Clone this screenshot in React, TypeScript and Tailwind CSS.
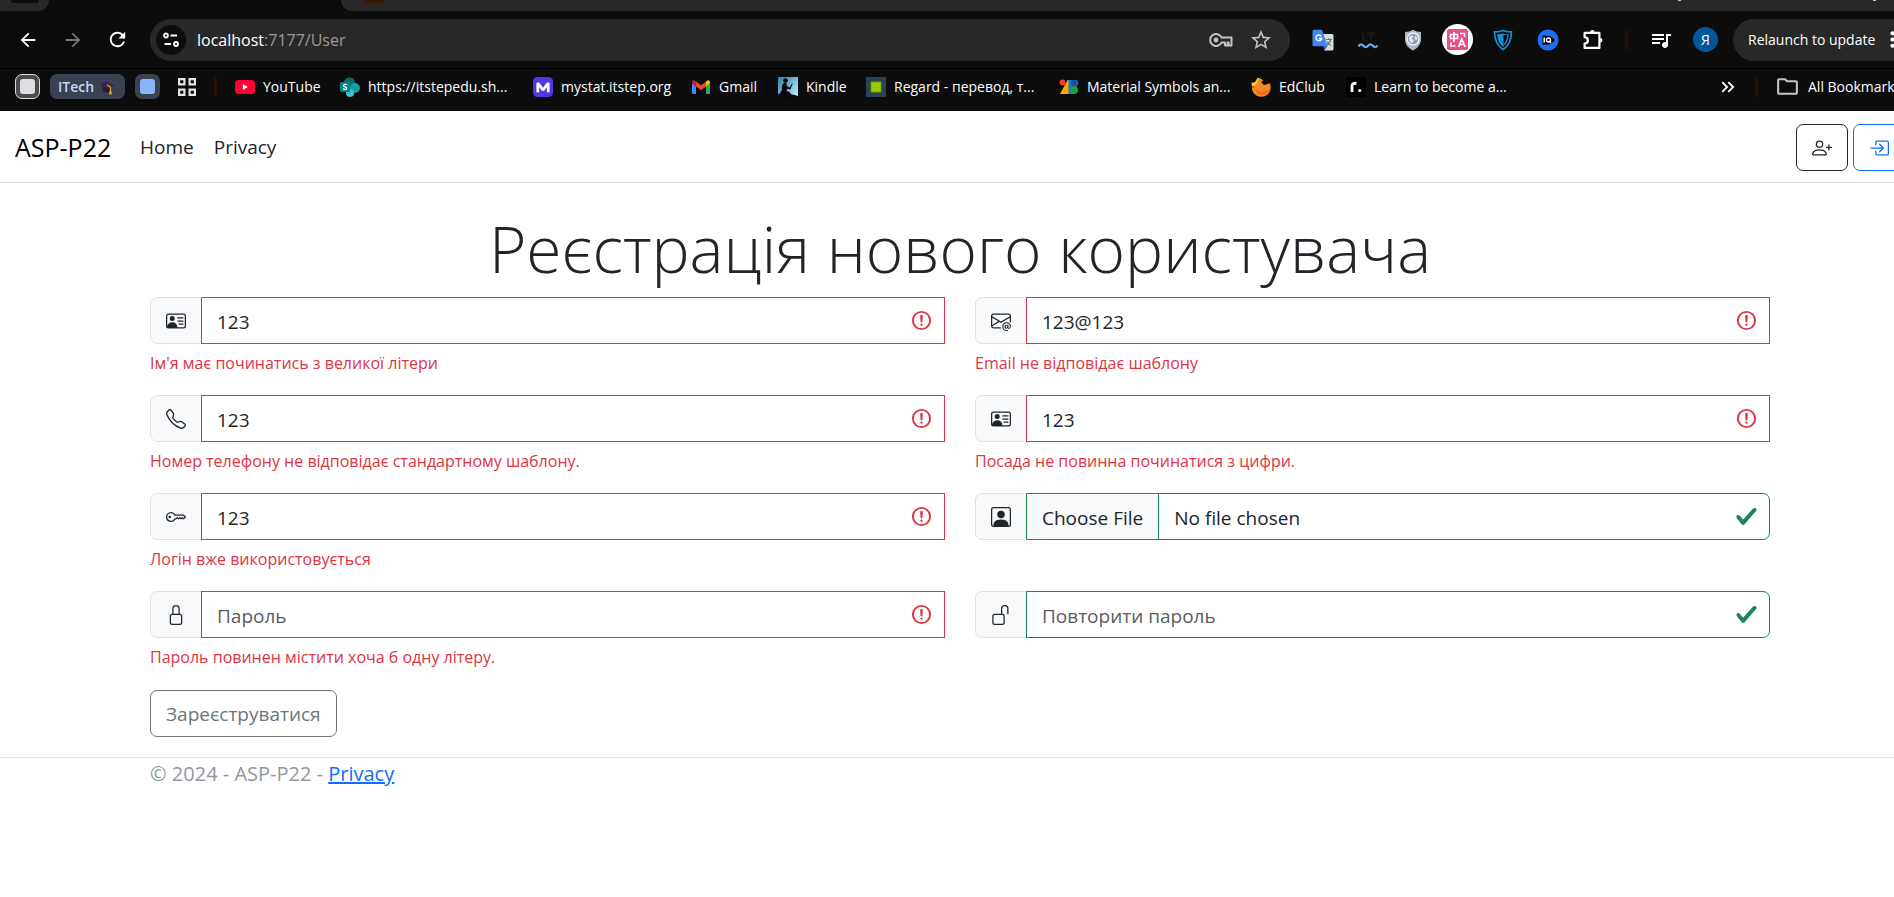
import type { ReactNode } from "react";
import {
  MdArrowBack,
  MdArrowForward,
  MdRefresh,
  MdStarBorder,
  MdOutlineFolder,
  MdMoreVert,
  MdQueueMusic,
  MdKeyboardDoubleArrowRight,
} from "react-icons/md";
import {
  BsBoxArrowInRight,
  BsEnvelopeAt,
  BsKey,
  BsLock,
  BsPersonPlus,
  BsPersonSquare,
  BsPersonVcard,
  BsTelephone,
  BsUnlock,
} from "react-icons/bs";

/* ---------- toolbar drawings ---------- */

const TuneIcon = () => (
  <svg viewBox="0 0 16 16" className="size-4" fill="none" stroke="#fff" strokeWidth="1.8">
    <circle cx="3" cy="3.5" r="2" />
    <path d="M7.5 3.5H14M1.5 12H8" />
    <circle cx="13" cy="12" r="2" />
  </svg>
);

const PasswordKeyIcon = () => (
  <svg viewBox="0 0 24 14" className="h-[14px] w-6" fill="none" stroke="#c4c4c4" strokeWidth="2">
    <path d="M12.6 4.6A6 6 0 1 0 12.6 9.4H16V12.5H18.6V9.4H19.6V12.5H22.5V4.6Z" strokeLinejoin="round" />
    <circle cx="7" cy="7" r="2.4" fill="#c4c4c4" stroke="none" />
  </svg>
);

const TranslateIcon = () => (
  <svg viewBox="0 0 22 22" className="size-[22px]">
    <path d="M9 5h11a1.500 1.500 0 0 1 1.500 1.500V20a1.500 1.500 0 0 1-1.500 1.500h-7.500z" fill="#dcdcdc" />
    <path d="M13.500 10.500h6.500M16.700 9v1.500M18.700 10.500c-.7 3-2.500 4.800-4.700 6M14.700 12.500c1 2 2.500 3.300 4.500 4" stroke="#5f7f86" strokeWidth="1.200" fill="none" />
    <path d="M2 .8h8l5.500 16.500H2A1.500 1.500 0 0 1 .5 15.800V2.300A1.500 1.500 0 0 1 2 .8z" fill="#4285f4" />
    <path d="M11.500 17.300h4l-3.300 4z" fill="#2a56c6" />
    <path d="M9.300 7.300A2.900 2.900 0 1 0 9.700 9.500H6.900" stroke="#fff" strokeWidth="1.400" fill="none" />
  </svg>
);

const WaveIcon = () => (
  <svg viewBox="0 0 22 22" className="size-[22px]" fill="none">
    <path d="M6 3.500v8h4M10 4.500h8M14 4.500v8" stroke="#181818" strokeWidth="2.400" />
    <path d="M1.500 17.500c1.600-2.700 3.200-2.700 4.800-.8s3.200 1.900 4.800 0 3.200-1.900 4.800 0 3.200 1.900 4.600-.2" stroke="#5cb3f0" strokeWidth="2.200" />
  </svg>
);

const GlobeShieldIcon = () => (
  <svg viewBox="0 0 22 22" className="size-[22px]">
    <path d="M11 .8c2.500 1.600 5 2.100 8 2.200v7c0 5.500-3.200 9-8 11.400C6.200 19 3 15.500 3 10V3c3-.1 5.500-.6 8-2.200z" fill="#aeb6c4" />
    <circle cx="11" cy="10" r="6" fill="#8f9bb0" stroke="#eceff4" strokeWidth="1.500" />
    <path d="M7 8.500c1.500-2.500 3.500-2.500 4.500-1.500L10 9.500l2 2-2 3c-2-1-3.500-3-3-6zM13 6.500l2.500 2-1 3-2-1.500z" fill="#dfe4ec" />
  </svg>
);

const PinkTranslateIcon = () => (
  <svg viewBox="0 0 31 31" className="size-[31px]">
    <circle cx="15.500" cy="15.500" r="15.500" fill="#fff" />
    <rect x="5" y="5" width="21" height="21" rx="2" fill="#ea4c89" />
    <path d="M8.500 10.500h7v4h-7zM12 8v10M18 9.500h4.500V13M9 18.500V22h4.500M16.500 23l3.300-8 3.400 8M17.800 20.500h4" stroke="#fff" strokeWidth="1.700" fill="none" />
  </svg>
);

const BlueShieldIcon = () => (
  <svg viewBox="0 0 22 22" className="size-[22px]" fill="none" stroke="#1b8fd0">
    <path d="M11 1.500c2.500 1 5.500 1.500 8.500 1.300-.1 8.500-2.500 14-8.500 17.700C5 16.800 2.600 11.300 2.500 2.800 5.500 3 8.500 2.500 11 1.500z" strokeWidth="1.600" />
    <path d="M11 5c1.700.6 3.300.9 5 .9-.4 5-2 8.700-5 11.200-3-2.500-4.600-6.200-5-11.200 1.700 0 3.300-.3 5-.9z" strokeWidth="1.200" />
    <path d="M11 5c-1.700.6-3.300.9-5 .9.400 5 2 8.700 5 11.200z" fill="#1b8fd0" />
  </svg>
);

const IqIcon = () => (
  <svg viewBox="0 0 22 22" className="size-[22px]">
    <circle cx="11" cy="11" r="10.500" fill="#1f6df5" />
    <path d="M5.500 6.500l7 .5 5 3v2l-5 3.500-7 .5z" fill="#0b0b0b" />
    <path d="M7.300 8.500v5" stroke="#fff" strokeWidth="1.600" />
    <circle cx="11.500" cy="11" r="2" fill="none" stroke="#fff" strokeWidth="1.300" />
    <path d="M12 11.800l2 2" stroke="#fff" strokeWidth="1.200" />
  </svg>
);

const PuzzleIcon = () => (
  <svg viewBox="0 0 22 22" className="size-[22px]" fill="none" stroke="#fff" strokeWidth="2.200" strokeLinejoin="round">
    <path d="M2.600 3.900H17.400V18.900H2.600V14.600C4.600 14.400 5.900 13.200 5.900 11.400S4.600 8.400 2.600 8.200Z" />
    <path d="M8 3.200a2.300 2.300 0 0 1 4.600 0zM18.200 9a2.300 2.300 0 0 1 0 4.600z" fill="#fff" stroke="none" />
  </svg>
);

/* ---------- bookmark drawings ---------- */

const CapIcon = () => (
  <svg viewBox="0 0 16 16" className="size-4">
    <path d="M3.500 7v5c2 1.800 6 1.800 7.500 0V7z" fill="#2c1b3a" />
    <path d="M.5 5.500L7 2l8.500 4.500L9 10z" fill="#3d2450" />
    <path d="M8 6l3.500 2v6" stroke="#f5a623" strokeWidth="1.200" fill="none" />
    <path d="M10.500 12.500h2l.3 3h-2.600z" fill="#f5a623" />
  </svg>
);

const AppsIcon = () => (
  <svg viewBox="0 0 20 20" className="size-5" fill="none" stroke="#e3e3e3" strokeWidth="2.200">
    <path d="M2.100 2.100h5.300v5.300H2.100zM12.600 2.100h5.300v5.300h-5.300zM2.100 12.600h5.300v5.300H2.100zM12.600 12.600h5.300v5.300h-5.300z" />
  </svg>
);

const YouTubeIcon = () => (
  <svg viewBox="0 0 20 20" className="size-5">
    <rect x="0" y="3" width="20" height="14" rx="3.500" fill="#ff0033" />
    <path d="M7.800 7v6l5.200-3z" fill="#fff" />
  </svg>
);

const SharePointIcon = () => (
  <svg viewBox="0 0 20 20" className="size-5">
    <circle cx="9.500" cy="6" r="5.700" fill="#036c70" />
    <circle cx="15" cy="11" r="5" fill="#1a9ba1" />
    <circle cx="10" cy="16" r="4" fill="#37c6d0" />
    <rect x="0" y="5" width="10" height="10" rx="1" fill="#038387" />
    <path d="M6.800 7.800C5.500 7 3.500 7.300 3.500 8.700s3.200 1 3.200 2.500-2.200 1.600-3.500.7" stroke="#fff" strokeWidth="1.300" fill="none" />
  </svg>
);

const MystatIcon = () => (
  <svg viewBox="0 0 20 20" className="size-5">
    <rect width="20" height="20" rx="4.500" fill="#5038e0" />
    <path d="M4.800 15.200V6L10 13l5.200-7v9.200" stroke="#fff" strokeWidth="2.800" fill="none" strokeLinejoin="bevel" />
  </svg>
);

const GmailIcon = () => (
  <svg viewBox="0 0 20 20" className="size-5">
    <path d="M1 6l4 3v8H2.300A1.300 1.300 0 0 1 1 15.700z" fill="#4285f4" />
    <path d="M19 6l-4 3v8h2.700a1.300 1.300 0 0 0 1.300-1.300z" fill="#34a853" />
    <path d="M15 4.500l1-.8c1.300-1 3-.1 3 1.500V6.500L15 9.500z" fill="#fbbc04" />
    <path d="M5 9.500v-5l5 3.800 5-3.800v5l-5 3.800z" fill="#ea4335" />
    <path d="M1 5.200c0-1.600 1.700-2.500 3-1.500l1 .8v5l-4-3z" fill="#c5221f" />
  </svg>
);

const KindleIcon = () => (
  <svg viewBox="0 0 20 20" className="size-5">
    <defs>
      <linearGradient id="kindleSky" x1="0" y1="0" x2="1" y2="1">
        <stop offset="0" stopColor="#2f7fae" />
        <stop offset="1" stopColor="#c4f4ff" />
      </linearGradient>
    </defs>
    <rect width="20" height="20" fill="url(#kindleSky)" />
    <circle cx="7.500" cy="3.500" r="2.300" fill="#05080a" />
    <path d="M6 5.500c-2.600 2.500-2.500 5-2 7.500L1.500 16.500c2 1.600 7 2 12 1L11 14.500l-2.500-.3 1-2.700 2.700 1.300 2.500-6-.8-.3-2.400 4-2.700-1.600L8.500 6z" fill="#05080a" />
    <path d="M0 17c6-.8 14-.4 20 2v1H0z" fill="#05080a" />
  </svg>
);

const RegardIcon = () => (
  <svg viewBox="0 0 20 20" className="size-5">
    <rect width="20" height="20" fill="#2b4256" />
    <rect x="5" y="5" width="10" height="10" fill="#99cc00" stroke="#6e9a10" />
  </svg>
);

const MaterialIcon = () => (
  <svg viewBox="0 0 20 20" className="size-5">
    <path d="M1 17L8.500 3H12v14z" fill="#f9ab00" />
    <circle cx="3.500" cy="5.500" r="2.900" fill="#ea4335" />
    <path d="M9.500 3H15a3.300 3.300 0 0 1 2 6.300L15 17H9.500z" fill="#1a73e8" />
    <circle cx="15" cy="13" r="4" fill="#1e9e4a" />
    <circle cx="15" cy="6" r="3" fill="#174ea6" />
  </svg>
);

const PhoenixIcon = () => (
  <svg viewBox="0 0 20 20" className="size-5">
    <path d="M.5 5.500C4 6.500 5 4.500 6 1.500L8.500 1l4 2.500-2 .8c0 2 1.500 3.700 3.500 3.500 2.500-.2 3-2 5.500-1-.5 1 .5 2 0 5.500-.8 4.500-4.500 7.500-9 7.500-6 0-10-4.500-9.500-10l2 1z" fill="#f08a24" />
    <path d="M.5 5.500C4 6.500 5 4.500 6 1.500L8 1c-.5 4-2 7-7 8.800L1 10.500z" fill="#f9c04a" />
    <path d="M5 12c3 3.500 8 4 13 .5-1.500 4-4.500 6-8.500 5.500C7 17.500 5.500 15 5 12z" fill="#f56a14" />
  </svg>
);

const RoadmapIcon = () => (
  <svg viewBox="0 0 20 20" className="size-5">
    <rect width="20" height="20" rx="2" fill="#000" />
    <path d="M6 15V9c0-2 1.500-3 4.500-2.700" stroke="#fff" strokeWidth="2.800" fill="none" />
    <circle cx="13.700" cy="13.500" r="1.500" fill="#fff" />
  </svg>
);

type Bookmark = { label: string; icon: ReactNode; width: string };

const bookmarks: Bookmark[] = [
  { label: "YouTube", icon: <YouTubeIcon />, width: "w-[105px]" },
  { label: "https://itstepedu.sh...", icon: <SharePointIcon />, width: "w-[193px]" },
  { label: "mystat.itstep.org", icon: <MystatIcon />, width: "w-[158px]" },
  { label: "Gmail", icon: <GmailIcon />, width: "w-[87px]" },
  { label: "Kindle", icon: <KindleIcon />, width: "w-[88px]" },
  { label: "Regard - перевод, т...", icon: <RegardIcon />, width: "w-[193px]" },
  { label: "Material Symbols an...", icon: <MaterialIcon />, width: "w-[192px]" },
  { label: "EdClub", icon: <PhoenixIcon />, width: "w-[95px]" },
  { label: "Learn to become a...", icon: <RoadmapIcon />, width: "w-[190px]" },
];

const extensions: { name: string; icon: ReactNode }[] = [
  { name: "Translate", icon: <TranslateIcon /> },
  { name: "Grammar", icon: <WaveIcon /> },
  { name: "Web guard", icon: <GlobeShieldIcon /> },
  { name: "Immersive translate", icon: <PinkTranslateIcon /> },
  { name: "VPN", icon: <BlueShieldIcon /> },
  { name: "IQ", icon: <IqIcon /> },
  { name: "Extensions", icon: <PuzzleIcon /> },
];

const Divider = () => <span className="h-5 w-[3px] shrink-0 rounded-full bg-[#2a0f04]" />;

function BrowserChrome() {
  return (
    <div className="bg-[#0c0c0c] text-white">
      <div className="flex h-[11px] gap-[292px] overflow-hidden">
        <div className="flex w-[49px] shrink-0 justify-center rounded-br-[16px] bg-[#282828]">
          <span className="h-[3px] w-[28px] rounded-b-full bg-[#0c0c0c]" />
        </div>
        <div className="flex grow justify-between rounded-bl-[16px] bg-[#282828] pr-[44px] pl-[22px]">
          <span className="h-[3px] w-5 rounded-b-full bg-[#3d1604]" />
          <div className="flex gap-[192px]">
            <span className="h-px w-[3px] bg-[#c4c4c4]" />
            <span className="h-px w-[3px] bg-[#c4c4c4]" />
          </div>
        </div>
      </div>

      <div className="flex h-[57px] items-center">
        <div className="flex w-[150px] shrink-0 items-center pl-[5px]">
          <button aria-label="Back" className="flex w-[45px] justify-center">
            <MdArrowBack className="size-[22px]" />
          </button>
          <button aria-label="Forward" className="flex w-[45px] justify-center text-[#757575]">
            <MdArrowForward className="size-[22px]" />
          </button>
          <button aria-label="Reload" className="flex w-[45px] justify-center">
            <MdRefresh className="size-[23px]" />
          </button>
        </div>
        <div className="flex h-[42px] min-w-0 grow items-center rounded-full bg-[#282828] pr-[17px] pl-[6px]">
          <button aria-label="Site information" className="flex size-[30px] shrink-0 items-center justify-center rounded-full bg-[#0c0c0c]">
            <TuneIcon />
          </button>
          <div className="grow pl-[11px] text-[16px] text-[#9a9a9a]">
            <span className="text-white">localhost</span>:7177/User
          </div>
          <button aria-label="Passwords" className="mr-4">
            <PasswordKeyIcon />
          </button>
          <button aria-label="Bookmark this page">
            <MdStarBorder className="size-[24px] text-[#c4c4c4]" />
          </button>
        </div>
        <div className="flex shrink-0 items-center pl-[10px]">
          {extensions.map((e) => (
            <button key={e.name} aria-label={e.name} className="flex w-[45px] justify-center">
              {e.icon}
            </button>
          ))}
          <div className="flex w-[23px] justify-center">
            <Divider />
          </div>
          <button aria-label="Media controls" className="flex w-[45px] justify-center">
            <MdQueueMusic className="size-[24px]" />
          </button>
          <button aria-label="Profile" className="flex w-[45px] justify-center">
            <span className="flex size-[25px] items-center justify-center rounded-full bg-[#01579b] text-[14px]">Я</span>
          </button>
          <button className="ml-[5px] flex h-[42px] w-[187px] items-center justify-between rounded-l-full bg-[#282828] px-[15px] text-[14px] whitespace-nowrap">
            Relaunch to update
            <MdMoreVert className="size-[25px] shrink-0" />
          </button>
        </div>
      </div>

      <div className="flex h-[43px] items-center border-t border-black pb-[7px] text-[14px] whitespace-nowrap">
        <div className="flex w-[235px] shrink-0 items-center pl-[15px]">
          <button aria-label="Tab group" className="flex size-[25px] items-center justify-center rounded-[7px] border border-[#dcdde0] bg-[#4a4b4d]">
            <span className="size-[15px] rounded-[3px] bg-[#dcdde0]" />
          </button>
          <button className="ml-[10px] flex h-[25px] w-[75px] items-center justify-between rounded-[7px] bg-[#3a4150] pr-[10px] pl-2 font-semibold text-[#c7d9f8]">
            ITech <CapIcon />
          </button>
          <button aria-label="Blue tab group" className="ml-[10px] flex size-[25px] items-center justify-center rounded-[7px] bg-[#3a4150]">
            <span className="size-[15px] rounded-[3px] bg-[#8ab4f8]" />
          </button>
          <button aria-label="Apps" className="mr-[17px] ml-[17px]">
            <AppsIcon />
          </button>
          <Divider />
        </div>
        <nav className="flex grow">
          {bookmarks.map((b) => (
            <a key={b.label} href="#" className={`flex shrink-0 items-center gap-2 ${b.width}`}>
              {b.icon}
              {b.label}
            </a>
          ))}
        </nav>
        <button aria-label="More bookmarks">
          <MdKeyboardDoubleArrowRight className="size-[22px]" />
        </button>
        <div className="flex w-[34px] justify-center">
          <Divider />
        </div>
        <button className="flex w-[147px] items-center gap-2 pl-[2px]">
          <MdOutlineFolder className="size-[25px] text-[#c4c4c4]" />
          All Bookmarks
        </button>
      </div>
    </div>
  );
}

/* ---------- site ---------- */

const InvalidMark = () => (
  <svg viewBox="0 0 12 12" className="pointer-events-none absolute top-3 right-3 size-[23px]" fill="none" stroke="#dc3545">
    <circle cx="6" cy="6" r="4.500" />
    <path strokeLinejoin="round" d="M5.800 3.600h.4L6 6.500z" />
    <circle cx="6" cy="8.200" r=".6" fill="#dc3545" stroke="none" />
  </svg>
);

const ValidMark = () => (
  <svg viewBox="0 0 8 8" className="pointer-events-none absolute top-3 right-3 size-[23px]">
    <path fill="#198754" d="M2.300 6.730.6 4.530c-.4-1.040.46-1.400 1.100-.8l1.100 1.400 3.400-3.800c.6-.63 1.600-.27 1.200.7l-4 4.600c-.43.5-.8.4-1.100.1z" />
  </svg>
);

type FieldProps = {
  id: string;
  name: string;
  icon: ReactNode;
  type?: string;
  value?: string;
  placeholder?: string;
  error?: string;
};

function Field({ id, name, icon, type = "text", value, placeholder, error }: FieldProps) {
  const isFile = type === "file";
  return (
    <div className="h-[98px]">
      <div className="flex h-[47px]">
        <label
          htmlFor={id}
          aria-label={name}
          className="flex w-[52px] shrink-0 items-center justify-center rounded-l-[7px] border border-[#dee2e6] bg-[#f8f9fa] text-[20px]"
        >
          {icon}
        </label>
        <div className="relative -ml-px grow">
          <input
            id={id}
            type={type}
            defaultValue={value}
            placeholder={placeholder}
            className={`h-full w-full border bg-white text-[#212529] outline-none placeholder:text-[#595c5f] ${
              error ? "border-[#dc3545]" : "rounded-r-[7px] border-[#198754]"
            } ${
              isFile
                ? "leading-[45px] file:mr-[15px] file:h-[45px] file:border-0 file:border-r file:border-solid file:border-[#198754] file:bg-[#f8f9fa] file:px-[15px] file:pt-[2px] file:text-[#212529]"
                : "pt-[2px] pr-12 pl-[15px]"
            }`}
          />
          {error ? <InvalidMark /> : <ValidMark />}
        </div>
      </div>
      {error && <p className="mt-[6px] text-[16px] leading-[26px] text-[#dc3545]">{error}</p>}
    </div>
  );
}

export default function App() {
  return (
    <div className="min-h-screen overflow-hidden bg-white font-['Open_Sans','Noto_Sans',sans-serif] text-[19px] text-[#212529]">
      {/* The window is slightly wider than the viewport and runs off its right edge */}
      <div className="-mr-[26px]">
        <BrowserChrome />

        <header className="flex h-[72px] items-center border-b border-[#dee2e6] px-[15px] pt-[2px]">
          <a href="#" className="w-[125px] text-[25px] text-black">
            ASP-P22
          </a>
          <nav className="flex grow gap-5">
            <a href="#">Home</a>
            <a href="#">Privacy</a>
          </nav>
          <div className="flex gap-[5px]">
            <button aria-label="Sign up" className="flex h-[47px] w-[52px] items-center justify-center rounded-[7px] border border-[#212529] text-[20px]">
              <BsPersonPlus />
            </button>
            <button aria-label="Sign in" className="flex h-[47px] w-[52px] items-center justify-center rounded-[7px] border border-[#0d6efd] text-[20px] text-[#0d6efd]">
              <BsBoxArrowInRight />
            </button>
          </div>
        </header>

        <main className="mx-auto max-w-[1650px] px-[15px] pt-6">
          <h1 className="mb-[6px] text-center text-[64px] leading-[84px] font-light">Реєстрація нового користувача</h1>
          <form>
            <div className="grid grid-cols-2 gap-x-[30px]">
              <Field id="user-name" name="Ім'я" icon={<BsPersonVcard />} value="123" error="Ім'я має починатись з великої літери" />
              <Field id="user-email" name="Email" icon={<BsEnvelopeAt />} value="123@123" error="Email не відповідає шаблону" />
              <Field id="user-phone" name="Телефон" icon={<BsTelephone />} value="123" error="Номер телефону не відповідає стандартному шаблону." />
              <Field id="user-position" name="Посада" icon={<BsPersonVcard />} value="123" error="Посада не повинна починатися з цифри." />
              <Field id="user-login" name="Логін" icon={<BsKey />} value="123" error="Логін вже використовується" />
              <Field id="user-avatar" name="Аватар" icon={<BsPersonSquare />} type="file" />
              <Field id="user-password" name="Пароль" icon={<BsLock />} type="password" placeholder="Пароль" error="Пароль повинен містити хоча б одну літеру." />
              <Field id="user-repeat" name="Повторити пароль" icon={<BsUnlock />} type="password" placeholder="Повторити пароль" />
            </div>
            <button type="button" className="mt-px h-[47px] rounded-[7px] border border-[#6c757d] px-[15px] pt-[2px] text-[#6c757d]">
              Зареєструватися
            </button>
          </form>
        </main>

        <footer className="mt-5 border-t border-[#dee2e6] text-[20px] text-[#92989e]">
          <div className="mx-auto max-w-[1650px] px-[15px] leading-[32px]">
            © 2024 - ASP-P22 -{" "}
            <a href="#" className="text-[#0d6efd] underline">
              Privacy
            </a>
          </div>
        </footer>
      </div>
    </div>
  );
}
